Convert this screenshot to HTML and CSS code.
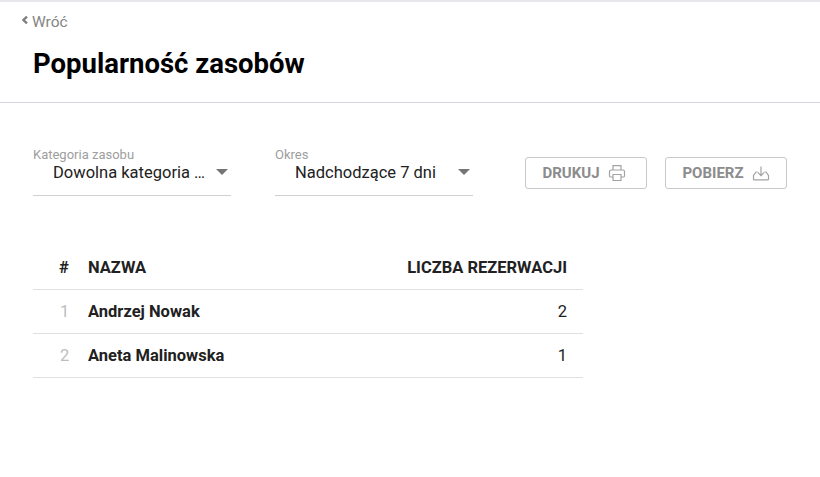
FILE: index.html
```html
<!DOCTYPE html>
<html lang="pl">
<head>
<meta charset="utf-8">
<title>Popularność zasobów</title>
<link rel="stylesheet" href="styles.css">
</head>
<body>
<header class="page-header">
  <a class="back" href="#"><svg class="back-icon" width="6" height="8" viewBox="0 0 6 8"><path d="M5 .6 1.4 4 5 7.400" fill="none" stroke="#808080" stroke-width="2.4"/></svg>Wróć</a>
  <h1 class="title">Popularność zasobów</h1>
</header>
<section class="filters">
  <div class="select select-first">
    <span class="select-label">Kategoria zasobu</span>
    <div class="select-value"><span class="select-text">Dowolna kategoria …</span><span class="caret"></span></div>
  </div>
  <div class="select">
    <span class="select-label">Okres</span>
    <div class="select-value"><span class="select-text">Nadchodzące 7 dni</span><span class="caret"></span></div>
  </div>
  <button class="btn btn-print">DRUKUJ
    <svg width="18" height="18" viewBox="0 0 18 18" fill="none" stroke="#a3a3a3" stroke-width="1.2"><path d="M5 6V1.6h8V6M5 13H2.600A1.100 1.100 0 0 1 1.500 12V7.600a1.600 1.600 0 0 1 1.600-1.600h11.800a1.600 1.600 0 0 1 1.600 1.600V12a1.100 1.100 0 0 1-1.100 1H13"/><path d="M5 10.500h8v6H5z"/></svg>
  </button>
  <button class="btn btn-download">POBIERZ
    <svg width="18" height="18" viewBox="0 0 18 18" fill="none" stroke="#a3a3a3" stroke-width="1.2"><path d="M9 2.500v9M5.800 8.400 9 11.600l3.200-3.200"/><path d="M5.500 8H4L1.500 11.500v3.400a.9.9 0 0 0 .9.9h13.200a.9.9 0 0 0 .9-.9v-3.400L14 8h-1.500"/></svg>
  </button>
</section>
<table class="report">
  <thead>
    <tr><th class="col-num">#</th><th class="col-name">NAZWA</th><th class="col-count">LICZBA REZERWACJI</th></tr>
  </thead>
  <tbody>
    <tr><td class="col-num">1</td><td class="col-name">Andrzej Nowak</td><td class="col-count">2</td></tr>
    <tr><td class="col-num">2</td><td class="col-name">Aneta Malinowska</td><td class="col-count">1</td></tr>
  </tbody>
</table>
</body>
</html>
```
FILE: styles.css
```css
* { box-sizing: border-box; }
html, body { margin: 0; padding: 0; }
body {
  width: 820px;
  height: 477px;
  overflow: hidden;
  background: #fff;
  font-family: Roboto, sans-serif;
  color: #212121;
  border-top: 2px solid #e6e8eb;
}
.page-header {
  height: 101px;
  border-bottom: 1px solid #d5d7de;
  padding: 11px 33px 0;
}
.back {
  display: flex;
  align-items: center;
  margin-left: -11px;
  height: 18px;
  font-size: 15.5px;
  line-height: 18px;
  color: #858585;
  text-decoration: none;
}
.back-icon { margin-right: 4px; margin-top: -4px; }
.title {
  margin: 13px 0 0;
  font-size: 27.5px;
  line-height: 40px;
  font-weight: 700;
  color: #000;
}
.filters {
  display: flex;
  align-items: flex-start;
  padding: 45px 0 0 33px;
  height: 142px;
}
.select { width: 198px; margin-right: 44px; border-bottom: 1px solid #d0d0d0; height: 48px; }
.select:nth-child(2) { margin-right: 52px; }
.select-label { display: block; font-size: 13px; line-height: 14px; color: #9e9e9e; }
.select-value {
  display: flex;
  justify-content: space-between;
  align-items: center;
  padding: 0 3px 0 20px;
  height: 20px;
  margin-top: 1px;
}
.select-text { font-size: 16.5px; line-height: 20px; color: #212121; }
.caret {
  width: 0;
  height: 0;
  border-left: 6px solid transparent;
  border-right: 6px solid transparent;
  border-top: 6px solid #757575;
  margin-top: -3px;
}
.btn {
  display: flex;
  align-items: center;
  justify-content: center;
  gap: 8px;
  height: 32px;
  margin-top: 9px;
  padding: 0;
  background: #fff;
  border: 1px solid #c8c8c8;
  border-radius: 3px;
  font-family: Roboto, sans-serif;
  font-size: 15px;
  font-weight: 700;
  color: #8c8c8c;
}
.btn-print { width: 122px; margin-right: 18px; padding-right: 4px; }
.btn-download { width: 122px; }
.report { margin-left: 33px; width: 550px; border-collapse: collapse; table-layout: fixed; }
.report th { height: 44px; padding: 2px 0 0; font-size: 16.5px; font-weight: 700; color: #212121; border-bottom: 1px solid #e0e0e0; }
.report td { height: 44px; padding: 0; font-size: 16.5px; border-bottom: 1px solid #e0e0e0; }
.col-num { width: 55px; text-align: left; }
.report td.col-num { color: #bdbdbd; padding-left: 27px; }
.report th.col-num { padding-left: 26px; }
.col-name { text-align: left; }
td.col-name { font-weight: 700; color: #212121; }
.report .col-count { text-align: right; padding-right: 16px; }
```
